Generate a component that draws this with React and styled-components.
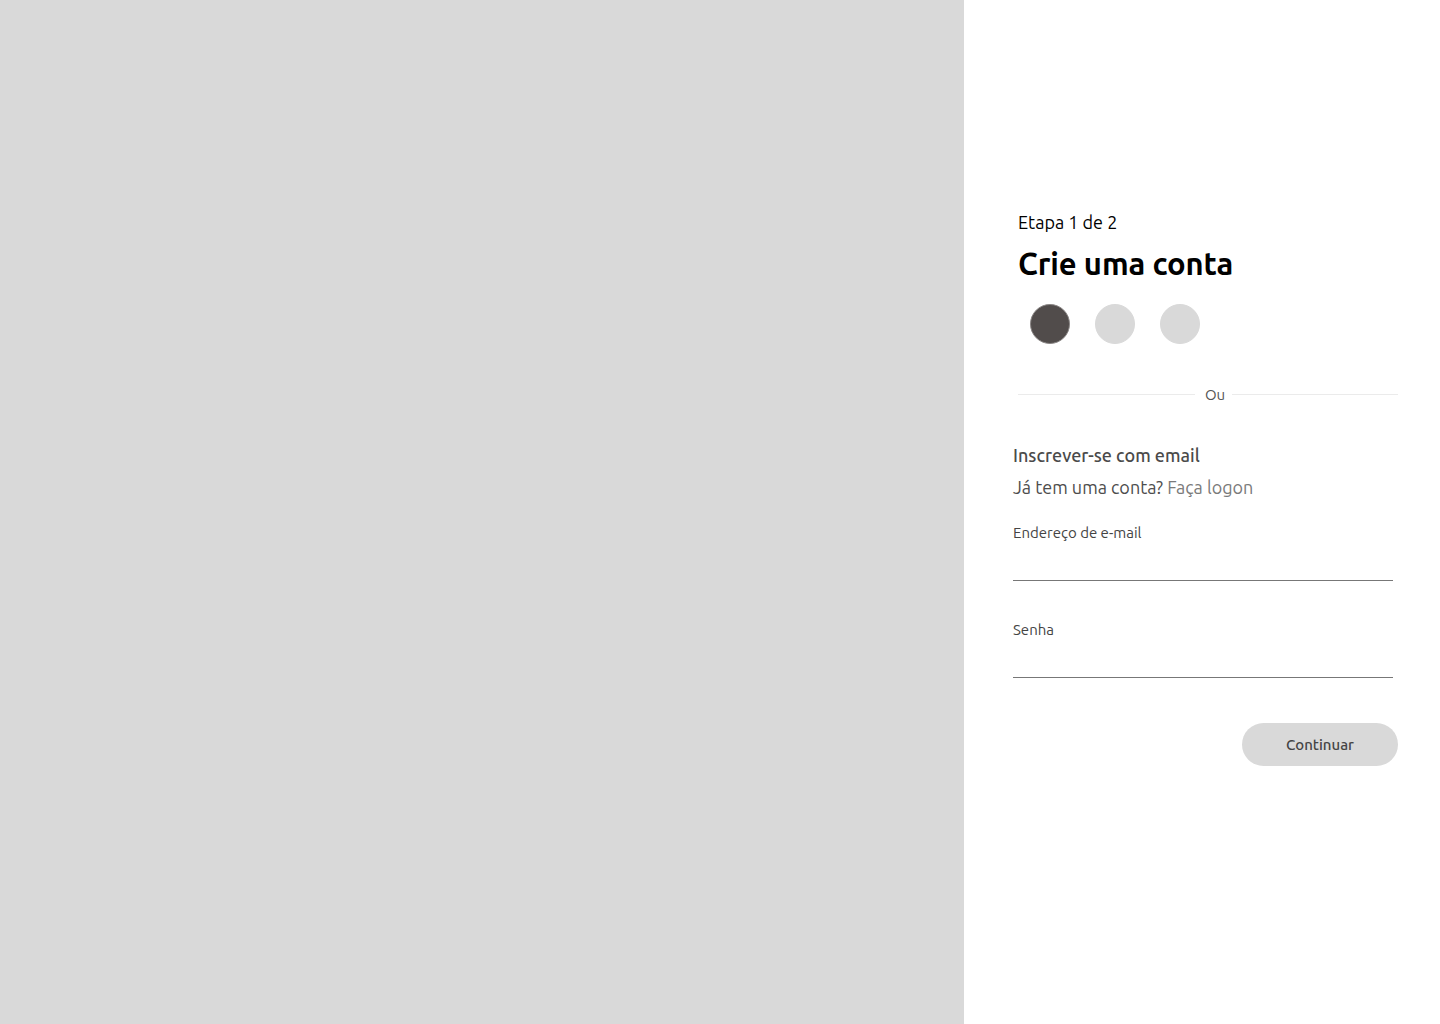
import React from 'react';
import styled, { createGlobalStyle } from 'styled-components';

const GlobalStyle = createGlobalStyle`
  html, body {
    margin: 0;
    padding: 0;
    background: #ffffff;
  }
  body {
    font-family: "Ubuntu", "Open Sans", "Noto Sans", sans-serif;
  }
`;

const Page = styled.div`
  display: grid;
  grid-template-columns: 964px 1fr;
  height: 1024px;
`;

const Artwork = styled.div`
  background: #d9d9d9;
`;

const Panel = styled.div`
  background: #ffffff;
  padding: 210px 42px 0 49px;
  display: flex;
  flex-direction: column;
`;

const Header = styled.div`
  padding-left: 5px;
`;

const Step = styled.div`
  font-size: 18px;
  line-height: 24px;
  color: #000;
`;

const Title = styled.h1`
  margin: 12px 0 0;
  font-size: 31px;
  line-height: 36px;
  font-weight: 700;
  color: #000;
  letter-spacing: -0.1px;
`;

const Providers = styled.div`
  display: flex;
  gap: 25px;
  margin: 22px 0 0 17px;
`;

const Provider = styled.div`
  width: 40px;
  height: 40px;
  border-radius: 50%;
  box-sizing: border-box;
  background: ${p => (p.active ? '#514c4b' : '#d9d9d9')};
  border: 1px solid ${p => (p.active ? '#8a8685' : '#d9d9d9')};
`;

const Divider = styled.div`
  display: flex;
  align-items: center;
  margin: 42px 0 0 5px;
  font-size: 15px;
  color: #555;

  span {
    margin: 0 7px 0 10px;
  }

  &::before,
  &::after {
    content: '';
    height: 1px;
    background: #ebebeb;
  }
  &::before {
    flex: 177;
  }
  &::after {
    flex: 166;
  }
`;

const Section = styled.div`
  margin-top: 40px;
  padding-right: 5px;
`;

const SectionTitle = styled.div`
  font-size: 18px;
  line-height: 24px;
  font-weight: 500;
  color: #4a4a4a;
`;

const Login = styled.div`
  margin-top: 8px;
  font-size: 18px;
  line-height: 24px;
  color: #4d4d4d;

  a {
    color: #7a7a7a;
    text-decoration: none;
  }
`;

const Field = styled.label`
  display: block;
  margin-top: ${p => p.gap || 22}px;
`;

const Label = styled.div`
  font-size: 15px;
  line-height: 20px;
  color: #444;
`;

const Input = styled.input`
  display: block;
  width: 100%;
  box-sizing: border-box;
  height: 30px;
  margin-top: 8px;
  border: none;
  border-bottom: 1px solid #777;
  outline: none;
  font-family: inherit;
  font-size: 15px;
  background: transparent;
`;

const Actions = styled.div`
  display: flex;
  justify-content: flex-end;
  margin-top: 45px;
`;

const Button = styled.button`
  width: 156px;
  height: 43px;
  border: none;
  border-radius: 22px;
  background: #d9d9d9;
  color: #444;
  font-family: inherit;
  font-size: 15px;
  font-weight: 500;
  cursor: pointer;
`;

export default function App() {
  return (
    <>
      <GlobalStyle />
      <Page>
        <Artwork />
        <Panel>
          <Header>
            <Step>Etapa 1 de 2</Step>
            <Title>Crie uma conta</Title>
          </Header>
          <Providers>
            <Provider active />
            <Provider />
            <Provider />
          </Providers>
          <Divider>
            <span>Ou</span>
          </Divider>
          <Section>
            <SectionTitle>Inscrever-se com email</SectionTitle>
            <Login>
              Já tem uma conta? <a href="#">Faça logon</a>
            </Login>
            <Field gap={24}>
              <Label>Endereço de e-mail</Label>
              <Input type="email" />
            </Field>
            <Field gap={39}>
              <Label>Senha</Label>
              <Input type="password" />
            </Field>
          </Section>
          <Actions>
            <Button>Continuar</Button>
          </Actions>
        </Panel>
      </Page>
    </>
  );
}
